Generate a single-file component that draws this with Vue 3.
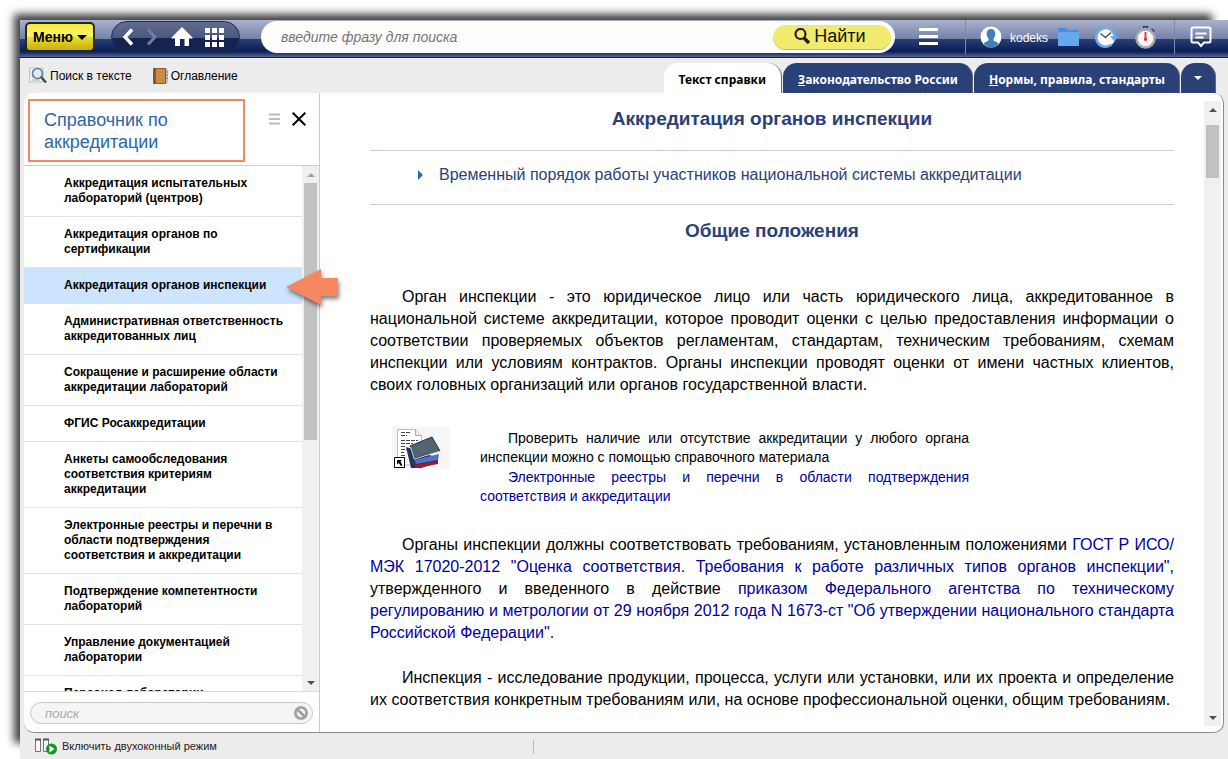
<script setup>
import { ref } from 'vue'

const sections = [
  'Аккредитация испытательных лабораторий (центров)',
  'Аккредитация органов по сертификации',
  'Аккредитация органов инспекции',
  'Административная ответственность аккредитованных лиц',
  'Сокращение и расширение области аккредитации лабораторий',
  'ФГИС Росаккредитации',
  'Анкеты самообследования соответствия критериям аккредитации',
  'Электронные реестры и перечни в области подтверждения соответствия и аккредитации',
  'Подтверждение компетентности лабораторий',
  'Управление документацией лаборатории',
  'Персонал лаборатории',
]
const active = ref(2)
const query = ref('')
const filter = ref('')
</script>

<template>
  <div class="page">
    <div class="window">
      <header class="topbar">
        <button class="menu-btn" type="button">Меню <span class="caret"></span></button>
        <nav class="nav-pill" aria-label="Навигация">
          <button type="button" aria-label="Назад">
            <svg width="12" height="18" viewBox="0 0 12 18"><path d="M10 1.500 3 9l7 7.500" fill="none" stroke="#fff" stroke-width="3.400" /></svg>
          </button>
          <button type="button" aria-label="Вперёд">
            <svg width="12" height="18" viewBox="0 0 12 18"><path d="m2 1.500 7 7.500-7 7.500" fill="none" stroke="#727ca0" stroke-width="3" /></svg>
          </button>
          <button type="button" aria-label="Домой">
            <svg width="22" height="20" viewBox="0 0 22 20"><path d="M11 0 .5 10.500v1H4V19h5v-7h4.500v7H18v-7.500h3.500v-1Z" fill="#fff" /></svg>
          </button>
          <button type="button" aria-label="Сервисы">
            <svg width="20" height="19" viewBox="0 0 20 19"><path d="M0 0h5v5H0zM7 0h5v5H7zM14 0h5v5h-5zM0 7h5v5H0zM7 7h5v5H7zM14 7h5v5h-5zM0 14h5v5H0zM7 14h5v5H7zM14 14h5v5h-5z" fill="#fff" /></svg>
          </button>
        </nav>
        <form class="search" @submit.prevent>
          <input v-model="query" type="text" aria-label="Поиск" placeholder="введите фразу для поиска" />
          <button type="submit">
            <svg width="16" height="17" viewBox="0 0 16 17"><circle cx="6.500" cy="6" r="5" fill="none" stroke="#222" stroke-width="2.200" /><path d="m10 10 5 5" stroke="#222" stroke-width="3.400" /></svg>
            Найти
          </button>
        </form>
        <button class="icon-btn lines" type="button" aria-label="Список">
          <svg width="20" height="18" viewBox="0 0 20 18"><path d="M0 1.500h19M0 8.500h19M0 15.500h19" stroke="#fff" stroke-width="3" /></svg>
        </button>
        <div class="user-area">
          <a class="user" href="#">
            <svg width="22" height="22" viewBox="0 0 22 22"><circle cx="11" cy="11" r="10.500" fill="#fff" /><path d="M11 3c3 0 4.300 2 4.300 5 0 2-.8 3.700-1.800 4.800v1.700l4.200 2.200c.5.300.6.800.6 1.200A10.400 10.400 0 0 1 11 21.500a10.400 10.400 0 0 1-7.300-3.600c0-.5.200-.9.700-1.200l4.200-2.200v-1.700C7.500 11.700 6.700 10 6.700 8c0-3 1.300-5 4.300-5Z" fill="#3e7fb9" /></svg>
            <span>kodeks</span>
          </a>
          <button class="icon-btn" type="button" aria-label="Папки">
            <svg width="21" height="20" viewBox="0 0 21 20"><path d="M0 1h8l2 2h10v4H0z" fill="#4b8dd6" /><path d="M0 5h21v14H0z" fill="#67a7ee" /></svg>
          </button>
          <button class="icon-btn" type="button" aria-label="История">
            <svg width="24" height="22" viewBox="0 0 24 22"><circle cx="10.500" cy="11" r="10" fill="#fff" /><path d="M16.500 18.500a9.300 9.300 0 1 1 3.300-8" fill="none" stroke="#6aaaf0" stroke-width="2.600" /><path d="M15 10h8.500l-4.200 5.500z" fill="#6aaaf0" /><path d="m5.500 7.500 5 4 5.500-5" fill="none" stroke="#555" stroke-width="1.600" /></svg>
          </button>
          <button class="icon-btn" type="button" aria-label="Таймер">
            <svg width="22" height="24" viewBox="0 0 22 24"><path d="M8 1h5v2H8z" fill="#333" /><path d="M9.500 2h2v3h-2z" fill="#888" /><path d="m16.500 4 3 2.500" stroke="#555" stroke-width="2" /><circle cx="10.500" cy="13.500" r="9" fill="#f6f6f6" stroke="#aaa" stroke-width="2.500" /><path d="M10.500 7v9" stroke="#d33" stroke-width="1.800" /><circle cx="10.500" cy="14" r="1.600" fill="#d33" /></svg>
          </button>
        </div>
        <button class="icon-btn chat" type="button" aria-label="Сообщения">
          <svg width="22" height="22" viewBox="0 0 22 22"><path d="M3 1.500h16q1.500 0 1.500 1.500v12q0 1.500-1.500 1.500h-5L11 20l-3-3.500H3Q1.500 16.500 1.500 15V3q0-1.500 1.500-1.500Z" fill="none" stroke="#fff" stroke-width="2" /><path d="M5.500 7.500h11M5.500 11.500h8" stroke="#fff" stroke-width="2" /></svg>
        </button>
      </header>

      <div class="toolbar">
        <button class="tool" type="button">
          <svg width="18" height="17" viewBox="0 0 18 17"><path d="M.5 1H14v14H.5z" fill="#eef3f3" stroke="#b5c5c8" /><path d="M3 4h3M3 7h2M3 10h3M3 13h8" stroke="#8fb5ba" /><circle cx="8.500" cy="6.500" r="5" fill="#d9edf8" stroke="#6b7d8c" stroke-width="1.600" /><path d="m12 10 5 5.500" stroke="#444" stroke-width="2.400" /></svg>
          Поиск в тексте
        </button>
        <button class="tool" type="button">
          <svg width="15" height="16" viewBox="0 0 15 16"><path d="M12 1h2v14h-2z" fill="#fff" stroke="#999" /><path d="M12 4h3M12 7h3M12 10h3" stroke="#668" /><path d="M.5.500h12v15H.5z" fill="#c98c45" stroke="#8a5a26" /><path d="M2 0v16" stroke="#6c4a30" stroke-width="1.500" /></svg>
          Оглавление
        </button>
        <nav class="tabs">
          <a class="tab current" href="#">Текст справки</a>
          <a class="tab" href="#"><u>З</u>аконодательство России</a>
          <a class="tab" href="#"><u>Н</u>ормы, правила, стандарты</a>
          <button class="tab more" type="button" aria-label="Ещё"><span class="caret"></span></button>
        </nav>
      </div>

      <main class="workspace">
        <aside class="sidebar">
          <div class="side-head">
            <h2>Справочник по аккредитации</h2>
            <button type="button" aria-label="Вид">
              <svg width="12" height="12" viewBox="0 0 12 12"><path d="M0 1.500h11M0 6h11M0 10.500h11" stroke="#bbb" stroke-width="2" /></svg>
            </button>
            <button type="button" aria-label="Закрыть">
              <svg width="14" height="14" viewBox="0 0 14 14"><path d="m.7.700 12.600 12.600M13.300.7.700 13.300" stroke="#000" stroke-width="2" /></svg>
            </button>
          </div>
          <div class="list-wrap">
            <nav class="list">
              <a v-for="(s, i) in sections" :key="s" href="#" :class="{ active: i === active }" @click.prevent="active = i">{{ s }}</a>
            </nav>
            <div class="scroll side-scroll">
              <span class="arrow up pale"></span><span class="thumb"></span><span class="arrow down"></span>
            </div>
          </div>
          <form class="side-search" @submit.prevent>
            <div class="field">
              <input v-model="filter" type="text" aria-label="Поиск по разделам" placeholder="поиск" />
              <button type="button" aria-label="Очистить" @click="filter = ''">
                <svg width="16" height="16" viewBox="0 0 16 16"><circle cx="8" cy="8" r="7.500" fill="#ddd" /><circle cx="8" cy="8" r="5.500" fill="#f4f4f4" stroke="#a0a0a0" stroke-width="2.600" /><path d="m4 4 8 8" stroke="#a0a0a0" stroke-width="2.600" /></svg>
              </button>
            </div>
          </form>
        </aside>

        <section class="content">
          <article>
            <h1>Аккредитация органов инспекции</h1>
            <div class="related">
              <span class="marker"></span>
              <a href="#">Временный порядок работы участников национальной системы аккредитации</a>
            </div>
            <h1>Общие положения</h1>
            <p class="first">Орган инспекции - это юридическое лицо или часть юридического лица, аккредитованное в национальной системе аккредитации, которое проводит оценки с целью предоставления информации о соответствии проверяемых объектов регламентам, стандартам, техническим требованиям, схемам инспекции или условиям контрактов. Органы инспекции проводят оценки от имени частных клиентов, своих головных организаций или органов государственной власти.</p>
            <div class="note">
              <svg width="58" height="42" viewBox="0 0 58 42">
                <path d="M0 0h58v42H0z" fill="#f6f6f6" />
                <path d="M5.500 2.500h18l6 6V38h-24z" fill="#fff" stroke="#bbb" />
                <path d="M23.500 2.500v6h6" fill="#eee" stroke="#aaa" />
                <path d="M9 5.500h9M9 8.500h6M9 13.500h17M9 16.500h12M9 19.500h5M9 22.500h6M9 25.500h3M9 28.500h4" stroke="#444" stroke-dasharray="4 1" />
                <path d="m14 20 5 21 10 0 17-5v-5z" fill="#17365d" />
                <path d="m15 20 7 18 24-4v3l-22 4z" fill="#a11d2c" />
                <path d="m17 18 5 15 25-6-1 6-22 4z" fill="#5571c6" />
                <path d="m18 19 22-9 8 14-25 7z" fill="#526470" stroke="#27323d" />
                <path d="m18.500 20 4 12 26-8" fill="none" stroke="#d8dde2" />
                <path d="M2.500 30.500h10v10h-10z" fill="#fff" stroke="#000" />
                <path d="M5 33h5l-1.500 1.500 2 4-1.500.5-2.300-3L5 37.500z" fill="#000" />
              </svg>
              <div class="note-text">
                <p>Проверить наличие или отсутствие аккредитации у любого органа инспекции можно с помощью справочного материала</p>
                <p><a href="#">Электронные реестры и перечни в области подтверждения соответствия и аккредитации</a></p>
              </div>
            </div>
            <p>Органы инспекции должны соответствовать требованиям, установленным положениями <a href="#">ГОСТ Р ИСО/МЭК 17020-2012 "Оценка соответствия. Требования к работе различных типов органов инспекции"</a>, утвержденного и введенного в действие <a href="#">приказом Федерального агентства по техническому регулированию и метрологии от 29 ноября 2012 года N 1673-ст "Об утверждении национального стандарта Российской Федерации"</a>.</p>
            <p>Инспекция - исследование продукции, процесса, услуги или установки, или их проекта и определение их соответствия конкретным требованиям или, на основе профессиональной оценки, общим требованиям.</p>
          </article>
          <div class="scroll main-scroll">
            <span class="arrow up"></span><span class="thumb"></span><span class="arrow down"></span>
          </div>
        </section>

        <svg class="pointer" width="60" height="48" viewBox="0 0 60 48"><path d="M3 21 38 3v9h17v18H38v9z" fill="#f58761" /></svg>
      </main>

      <footer class="status">
        <button type="button">
          <svg width="24" height="17" viewBox="0 0 24 17"><path d="M1.500 1.500h5v12h-5zM9.500 1.500h5v12h-5z" fill="#f8f8f8" stroke="#777" /><path d="M1 1.500h6M9 1.500h6" stroke="#555" stroke-width="2" /><circle cx="17.500" cy="11" r="5.500" fill="#149a1c" /><path d="M15.500 7.500v7l5-3.500z" fill="#fff" /></svg>
          Включить двухоконный режим
        </button>
        <span class="split"></span>
      </footer>
    </div>
  </div>
</template>

<style>
body {
  background: #fff;
}
</style>

<style scoped>
.page {
  box-sizing: border-box;
  height: 100vh;
  padding: 20px 0 0 20px;
  overflow: hidden;
  font-family: "Liberation Sans", Arial, sans-serif;
  color: #000;
}
.page *,
.page *::before {
  box-sizing: border-box;
}
a {
  color: inherit;
  text-decoration: none;
}
button {
  border: 0;
  padding: 0;
  background: none;
  font: inherit;
  color: inherit;
  display: flex;
  align-items: center;
  cursor: pointer;
}
input {
  border: 0;
  outline: 0;
  background: none;
  font: inherit;
  min-width: 0;
}
svg {
  display: block;
  flex: none;
}
.window {
  height: 100%;
  display: flex;
  flex-direction: column;
  background: #ececec;
  box-shadow: -11px -11px 8px -5px rgba(0, 0, 0, 0.75);
}
.caret {
  border: 5px solid transparent;
  border-top-color: currentColor;
  border-bottom: 0;
}

/* top bar */
.topbar {
  flex: none;
  height: 38px;
  display: flex;
  align-items: center;
  padding: 0 16px 3px 5px;
  border-bottom: 1px solid #131f4d;
  background: linear-gradient(#a9b3cf 0, #7480a6 19px, #2c4078 19px, #0a1e54 31px, #1c2f66 33px, #5a688f 37px);
  color: #fff;
}
.menu-btn {
  width: 70px;
  height: 30px;
  justify-content: center;
  gap: 4px;
  border: 2px solid #26261c;
  border-radius: 5px;
  background: linear-gradient(#f3e93c, #fdf46c 12px, #ece02b 13px, #c8ad0c);
  color: #000;
  font-size: 14px;
  font-weight: bold;
}
.nav-pill {
  width: 129px;
  height: 32px;
  margin-left: 16px;
  padding: 0 14px 0 10px;
  display: flex;
  align-items: center;
  justify-content: space-between;
  border: 1px solid #1e2d5e;
  border-radius: 16px;
  background: linear-gradient(#616c90, #4a577f 16px, #14234f 16px, #14234f);
}
.search {
  flex: 1;
  height: 32px;
  margin: 0 24px 0 21px;
  padding: 0 4px 0 20px;
  display: flex;
  align-items: center;
  border-radius: 16px;
  background: #fdfdfd;
}
.search input {
  flex: 1;
  padding: 0;
  font-size: 14px;
  font-style: italic;
}
.search input::placeholder {
  color: #757575;
}
.search button {
  width: 118px;
  height: 25px;
  padding-right: 4px;
  justify-content: center;
  gap: 4px;
  border-radius: 13px;
  border-bottom: 1px solid #c4bc4c;
  background: #f2ea6c;
  color: #111;
  font-size: 18px;
}
.lines {
  margin-right: 26px;
}
.user-area {
  height: 34px;
  display: flex;
  align-items: center;
  gap: 16px;
  padding: 0 17px 0 14px;
  border: 1px solid #7f8aae;
  border-width: 0 1px;
}
.user {
  display: flex;
  align-items: center;
  gap: 8px;
  margin-right: -6px;
  font-size: 12px;
}
.user span {
  padding-top: 2px;
}
.chat {
  margin-left: 15px;
}

/* tool bar and tabs */
.toolbar {
  flex: none;
  height: 35px;
  display: flex;
  align-items: center;
  padding-left: 9px;
  font-size: 12px;
}
.tool {
  gap: 3px;
  margin-right: 21px;
}
.tabs {
  align-self: flex-end;
  margin: 0 12px 0 auto;
  display: flex;
  gap: 1px;
}
.tab {
  height: 30px;
  display: flex;
  align-items: center;
  padding: 2px 14px 0 15px;
  border-right: 1px solid #666;
  border-radius: 14px 14px 0 0;
  background: #2a4177;
  color: #fff;
  font: bold 12px "Noto Sans", "Open Sans", sans-serif;
}
.tab.current {
  padding-right: 15px;
  background: #fff;
  color: #000;
}
.tab.more {
  width: 35px;
  padding: 0;
  justify-content: center;
}
.tab .caret {
  border-width: 4px 4px 0;
}

/* workspace */
.workspace {
  position: relative;
  flex: 1;
  min-height: 0;
  margin: 0 4px 0 4px;
  display: flex;
  border: 1px solid #8c8c8c;
  border-width: 0 1px 1px 0;
  border-radius: 10px;
  background: #fff;
}
.sidebar {
  flex: none;
  width: 296px;
  display: flex;
  flex-direction: column;
  border-right: 1px solid #ccc;
}
.side-head {
  display: flex;
  align-items: flex-start;
  padding: 6px 13px 3px 4px;
  border-bottom: 1px solid #ccc;
}
.side-head h2 {
  width: 217px;
  margin: 0 auto 0 0;
  padding: 8px 14px 7px;
  border: 2px solid #f58761;
  color: #2b66a8;
  font-size: 18px;
  font-weight: normal;
  line-height: 22px;
}
.side-head button {
  height: 40px;
  margin-left: 11px;
}
.list-wrap {
  flex: 1;
  min-height: 0;
  display: flex;
}
.list {
  flex: 1;
  overflow: hidden;
}
.list a {
  display: block;
  padding: 10px 16px 10px 40px;
  border-bottom: 1px solid #e2e2e2;
  font-size: 12px;
  font-weight: bold;
  line-height: 15px;
}
.list a.active {
  background: #cce4fe;
}
.scroll {
  flex: none;
  width: 17px;
  display: flex;
  flex-direction: column;
  align-items: center;
  background: #f0f0f0;
}
.thumb {
  width: 13px;
  background: #c1c1c1;
}
.arrow {
  height: 17px;
  display: flex;
  align-items: center;
}
.arrow::before {
  content: "";
  border: 4px solid transparent;
}
.arrow.up::before {
  border-top: 0;
  border-bottom-color: #505050;
}
.arrow.down::before {
  border-bottom: 0;
  border-top-color: #505050;
}
.arrow.pale::before {
  border-bottom-color: #a3a3a3;
}
.arrow.down {
  margin-top: auto;
}
.side-scroll .thumb {
  height: 49%;
}
.side-search {
  padding: 10px 6px 8px;
  border-top: 1px solid #ddd;
}
.field {
  height: 22px;
  display: flex;
  align-items: center;
  padding: 0 3px 0 14px;
  border: 1px solid #c8c8c8;
  border-radius: 11px;
  background: #f5f5f5;
}
.field input {
  flex: 1;
  padding: 0;
  font-size: 13px;
  font-style: italic;
}
.field input::placeholder {
  color: #a9a9a9;
}
.pointer {
  position: absolute;
  left: 259px;
  top: 173px;
  filter: drop-shadow(1px 3px 2px rgba(0, 0, 0, 0.5));
}

/* article */
.content {
  flex: 1;
  min-width: 0;
  display: flex;
  padding: 8px 2px 6px 0;
}
.main-scroll .thumb {
  height: 53px;
  margin-top: 7px;
}
article {
  flex: 1;
  min-width: 0;
  overflow: hidden;
  padding: 6px 30px 0 50px;
  font-size: 16px;
  line-height: 22px;
}
h1 {
  margin: 0;
  color: #2a4177;
  font-size: 19px;
  line-height: 24px;
  text-align: center;
}
.related {
  display: flex;
  align-items: center;
  margin: 19px 0 14px;
  padding: 13px 0 18px 48px;
  border: 1px solid #c8cde0;
  border-width: 1px 0;
  color: #2a4177;
}
.marker {
  margin-right: 16px;
  border: 5px solid transparent;
  border-left-color: #2b6cb0;
  border-right: 0;
}
article p {
  margin: 0 0 23px;
  text-align: justify;
  text-indent: 32px;
}
article p.first {
  margin: 43px 0 31px;
}
p a {
  color: #00009c;
}
.note {
  display: flex;
  align-items: flex-start;
  gap: 30px;
  margin: 0 0 27px 22px;
}
.note-text {
  width: 489px;
  padding-top: 2px;
}
.note-text p {
  margin: 0 0 1px;
  font-size: 14px;
  line-height: 19px;
  text-indent: 28px;
}

/* status bar */
.status {
  flex: none;
  height: 26px;
  display: flex;
  align-items: center;
  padding-left: 14px;
  font-size: 11px;
  color: #222;
}
.status button {
  width: 499px;
  gap: 4px;
}
.split {
  width: 1px;
  height: 15px;
  background: #bbb;
}
</style>
